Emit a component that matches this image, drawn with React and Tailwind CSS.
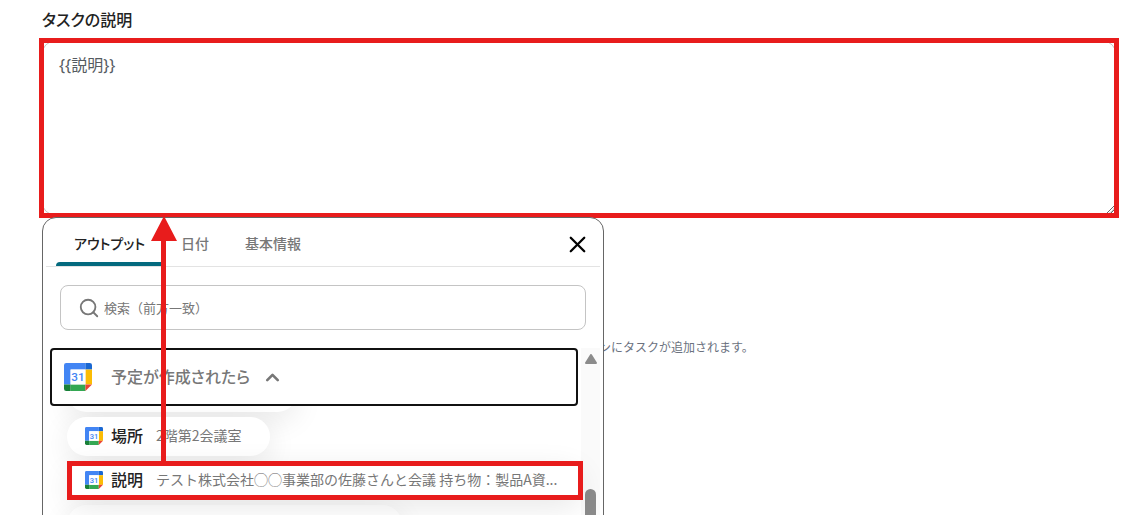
import React, { useState } from 'react';
import { ChevronUp, Search, X } from 'lucide-react';

const tabs = ['アウトプット', '日付', '基本情報'];

const outputs = [
  { id: 'place', label: '場所', value: '2階第2会議室' },
  {
    id: 'description',
    label: '説明',
    value: 'テスト株式会社◯◯事業部の佐藤さんと会議 持ち物：製品A資...',
    marked: true,
  },
];

const CalendarIcon = ({ className }) => (
  <svg viewBox="0 0 200 200" className={className} aria-hidden="true">
    <path fill="#4285f4" d="M16 0h137v47H47v106H0V16A16 16 0 0 1 16 0z" />
    <path fill="#1967d2" d="M153 0h31a16 16 0 0 1 16 16v31h-47z" />
    <path fill="#fbbc04" d="M153 47h47v106h-47z" />
    <path fill="#34a853" d="M47 153h106v47H47z" />
    <path fill="#188038" d="M0 153h47v47H16a16 16 0 0 1-16-16z" />
    <path fill="#ea4335" d="M153 153h47l-47 47z" />
    <path fill="#fff" d="M47 47h106v106H47z" />
    <text
      x="100"
      y="130"
      textAnchor="middle"
      fill="#4285f4"
      className="font-['Roboto'] text-[84px] font-medium"
    >
      31
    </text>
  </svg>
);

const OutputChip = ({ label, value, marked }) => (
  <li className="relative flex">
    <button
      type="button"
      className={`flex h-[39px] items-center rounded-full bg-white pb-[2px] pl-[18px] shadow-[0_8px_30px_rgba(0,0,0,0.09)] ${
        marked ? 'w-full' : 'pr-7'
      }`}
    >
      <CalendarIcon className="mr-2 size-[18px] shrink-0" />
      <span className="mr-[13px] pb-[2px] text-base font-medium whitespace-nowrap text-[#222]">{label}</span>
      <span className="text-[14px] whitespace-nowrap text-[#777]">{value}</span>
    </button>
    {marked && <span className="absolute inset-0 border-[5px] border-[#e81c1c] bg-transparent" />}
  </li>
);

const OutputPicker = () => {
  const [activeTab, setActiveTab] = useState(tabs[0]);
  const [search, setSearch] = useState('');

  return (
    <div className="absolute -top-px left-[3px] w-[562px] rounded-t-[14px] border border-[#666] bg-white">
      <div className="mx-[3px] flex h-[49px] items-center border-b border-[#e3e3e3] pl-[10px]">
        <div role="tablist" className="flex h-full">
          {tabs.map((tab) => (
            <button
              key={tab}
              type="button"
              role="tab"
              aria-selected={tab === activeTab}
              onClick={() => setActiveTab(tab)}
              className={`relative px-[18px] pt-[2px] text-[14px] font-medium [font-feature-settings:'palt'] ${
                tab === activeTab ? 'text-[#222]' : 'text-[#777]'
              }`}
            >
              {tab}
              {tab === activeTab && (
                <span className="absolute inset-x-0 bottom-0 h-1 rounded-tl bg-[#046a7e]" />
              )}
            </button>
          ))}
        </div>
        <button type="button" aria-label="閉じる" className="mt-1 mr-[9px] ml-auto text-black">
          <X size={27} strokeWidth={2} />
        </button>
      </div>

      <label className="mx-[17px] mt-[18px] flex h-[45px] items-center gap-1 rounded-[8px] border border-[#c4c4c4] pl-[17px]">
        <Search size={22} strokeWidth={2} className="text-[#777]" aria-hidden="true" />
        <input
          type="text"
          value={search}
          onChange={(e) => setSearch(e.target.value)}
          placeholder="検索（前方一致）"
          aria-label="検索（前方一致）"
          className="min-w-0 flex-1 text-[13px] outline-none placeholder:text-[#777]"
        />
      </label>

      <div className="mt-[18px] mr-[3px] ml-[7px] flex">
        <div className="min-w-0 flex-1 pr-[3px]">
          <button
            type="button"
            aria-expanded="true"
            className="relative z-10 flex h-[58px] w-full items-center rounded border-2 border-[#111] bg-white pl-3"
          >
            <CalendarIcon className="size-7" />
            <span className="ml-[19px] pb-[3px] text-base font-medium text-[#777] [font-feature-settings:'palt']">
              予定が作成されたら
            </span>
            <ChevronUp size={21} strokeWidth={3} className="ml-3 text-[#777]" />
          </button>
          <ul className="-mt-[33px] -mr-[5px] flex flex-col gap-[5px] pl-[17px]">
            <li className="h-[39px] w-[230px] rounded-full bg-white shadow-[0_8px_30px_rgba(0,0,0,0.09)]" />
            {outputs.map((output) => (
              <OutputChip key={output.id} {...output} />
            ))}
            <li className="h-[39px] w-[335px] rounded-full bg-white shadow-[0_8px_30px_rgba(0,0,0,0.09)]" />
          </ul>
        </div>
        <div className="flex w-[19px] flex-col items-center bg-[#fafafa] pt-[6px]">
          <svg viewBox="0 0 12 10" className="h-[10px] w-3" aria-hidden="true">
            <path d="M6 1 11 9H1z" fill="#8b8b8b" stroke="#8b8b8b" strokeWidth="2" strokeLinejoin="round" />
          </svg>
          <span className="mt-[125px] w-[11px] flex-1 rounded-t-full bg-[#8b8b8b]" />
        </div>
      </div>

      {/* arrow from the picked output up to the field */}
      <svg
        viewBox="0 0 26 246"
        className="pointer-events-none absolute -top-[2px] left-[108px] z-20 h-[246px] w-[26px]"
        aria-hidden="true"
      >
        <path d="M13 0 26 25H15V246H10V25H0z" fill="#e81c1c" />
      </svg>
    </div>
  );
};

const App = () => {
  const [description, setDescription] = useState('{{説明}}');

  return (
    <main className="h-screen overflow-hidden bg-white pr-[18px] pl-[39px] font-['Noto_Sans_CJK_JP',sans-serif]">
      <label
        htmlFor="description"
        className="block pt-[7px] pl-[3px] text-base font-medium text-[#222] [font-feature-settings:'palt']"
      >
        タスクの説明
      </label>
      <div className="relative mt-[7px] p-[3px]">
        <textarea
          id="description"
          value={description}
          onChange={(e) => setDescription(e.target.value)}
          className="block h-[174px] w-full resize rounded-[12px] border border-[#c4c4c4] px-4 py-[11px] font-['Noto_Sans','Noto_Sans_CJK_JP',sans-serif] text-base text-[#555b61] outline-none"
        />
        <span className="pointer-events-none absolute inset-0 border-[5px] border-[#e81c1c]" />
      </div>
      <div className="relative">
        <p className="pt-[120px] pl-[560px] text-[12px] text-[#6b7280]">ンにタスクが追加されます。</p>
        <OutputPicker />
      </div>
    </main>
  );
};

export default App;
